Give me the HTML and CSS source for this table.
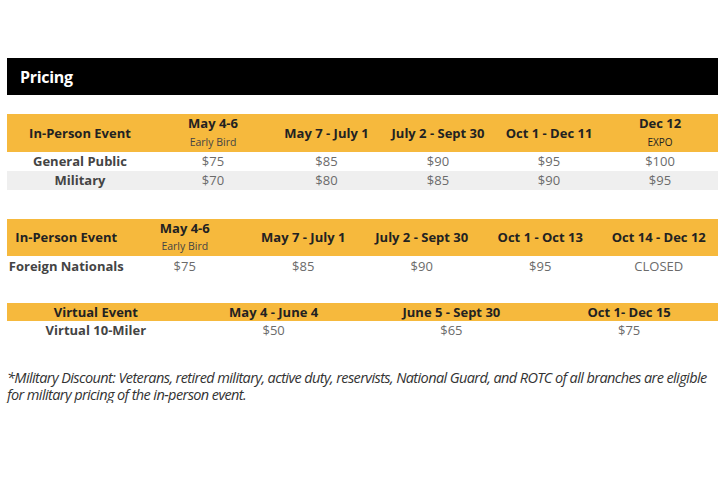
FILE: index.html
```html
<!DOCTYPE html>
<html>
<head>
<meta charset="utf-8">
<link rel="stylesheet" href="styles.css">
</head>
<body>
<div class="page">
  <div class="title-bar"><h2>Pricing</h2></div>

  <table class="price t1">
    <colgroup><col class="w146"><col class="w120"><col class="w107"><col class="w116"><col class="w106"><col class="w116"></colgroup>
    <thead>
      <tr class="head tall">
        <th>In-Person Event</th>
        <th><div class="main">May 4-6</div><div class="sub">Early Bird</div></th>
        <th>May 7 - July 1</th>
        <th>July 2 - Sept 30</th>
        <th>Oct 1 - Dec 11</th>
        <th><div class="main">Dec 12</div><div class="sub expo">EXPO</div></th>
      </tr>
    </thead>
    <tbody>
      <tr><td class="label">General Public</td><td>$75</td><td>$85</td><td>$90</td><td>$95</td><td>$100</td></tr>
      <tr class="alt"><td class="label">Military</td><td>$70</td><td>$80</td><td>$85</td><td>$90</td><td>$95</td></tr>
    </tbody>
  </table>

  <table class="price t2">
    <thead>
      <tr class="head tall">
        <th>In-Person Event</th>
        <th><div class="main">May 4-6</div><div class="sub">Early Bird</div></th>
        <th>May 7 - July 1</th>
        <th>July 2 - Sept 30</th>
        <th>Oct 1 - Oct 13</th>
        <th>Oct 14 - Dec 12</th>
      </tr>
    </thead>
    <tbody>
      <tr class="row2"><td class="label">Foreign Nationals</td><td>$75</td><td>$85</td><td>$90</td><td>$95</td><td>CLOSED</td></tr>
    </tbody>
  </table>

  <table class="price t3">
    <thead>
      <tr class="head short">
        <th>Virtual Event</th>
        <th>May 4 - June 4</th>
        <th>June 5 - Sept 30</th>
        <th>Oct 1- Dec 15</th>
      </tr>
    </thead>
    <tbody>
      <tr><td class="label">Virtual 10-Miler</td><td>$50</td><td>$65</td><td>$75</td></tr>
    </tbody>
  </table>

  <p class="note">*Military Discount: Veterans, retired military, active duty, reservists, National Guard, and ROTC of all branches are eligible for military pricing of the in-person event.</p>
</div>
</body>
</html>
```
FILE: styles.css
```css
html, body {
  margin: 0;
  padding: 0;
  background: #ffffff;
}
body {
  font-family: "Open Sans", "Liberation Sans", sans-serif;
  color: #333;
}
.page {
  padding: 58px 7px 0 7px;
  width: 711px;
}
.title-bar {
  background: #000;
  height: 37px;
  display: flex;
  align-items: center;
  padding-left: 13px;
}
.title-bar h2 {
  margin: 0;
  color: #fff;
  font-size: 16px;
  font-weight: 700;
  letter-spacing: -0.3px;
}
.price {
  width: 711px;
  border-collapse: collapse;
  table-layout: fixed;
}
.price th, .price td {
  padding: 0;
  text-align: center;
  white-space: nowrap;
}
.price th {
  font-size: 13px;
  font-weight: 700;
  color: #222;
  line-height: 17px;
}
.head {
  background: #f6b93d;
}
.t1 { margin-top: 19px; }
.w146 { width: 146px; }
.w120 { width: 120px; }
.w107 { width: 107px; }
.w116 { width: 116px; }
.w106 { width: 106px; }
.t1 .head { height: 38px; }
.t2 { margin-top: 29px; }
.t2 .head { height: 37px; }
.t3 { margin-top: 27px; }
.t3 .head { height: 18px; }
.t3 .head th { line-height: 18px; }
.main {
  height: 18px;
  line-height: 18px;
}
.sub {
  height: 19px;
  font-size: 10.5px;
  font-weight: 400;
  color: #444;
  line-height: 19px;
  overflow: hidden;
}
.t1 .sub { height: 20px; line-height: 20px; }
.sub.expo {
  font-size: 10px;
  color: #222;
}
.price td {
  font-size: 13px;
  color: #6b6b6b;
  height: 19px;
  line-height: 19px;
}
.price td.label {
  font-weight: 700;
  color: #444;
}
.row2 td { height: 20px; line-height: 20px; }
.alt { background: #efefef; }
.note {
  margin: 29px 0 0 0;
  font-size: 14.5px;
  font-style: italic;
  letter-spacing: -0.6px;
  line-height: 17px;
  color: #333;
  width: 711px;
}
```
